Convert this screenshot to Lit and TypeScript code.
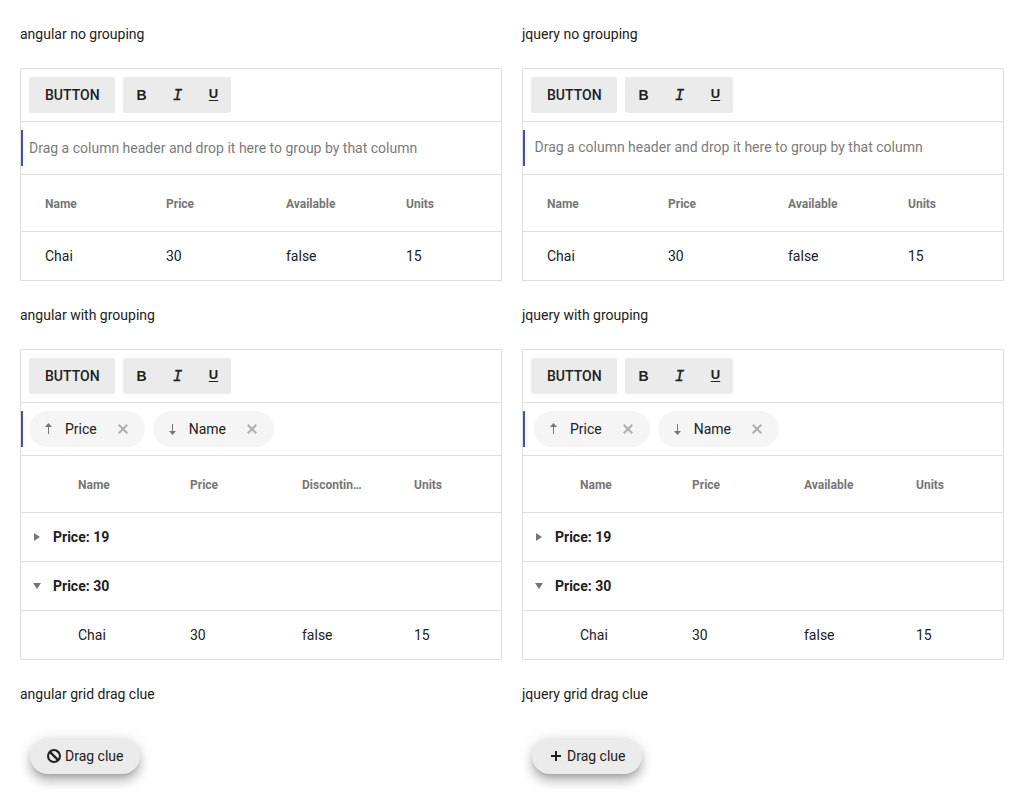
import { LitElement, html, css, svg, nothing } from "lit";
import { customElement, property } from "lit/decorators.js";

const icons = {
  up: svg`<path d="M7 13V6H4l3.500-4L11 6H8v7z"/>`,
  down: svg`<path d="M7 3v7H4l3.500 4L11 10H8V3z"/>`,
  close: svg`<path d="M13 11.500 9.500 8 13 4.500 11.500 3 8 6.500 4.500 3 3 4.500 6.500 8 3 11.500 4.500 13 8 9.500 11.500 13z"/>`,
  right: svg`<path d="M5 4v8l6-4z"/>`,
  expanded: svg`<path d="M4 5h8l-4 6z"/>`,
  denied: svg`<path fill-rule="evenodd" d="M8 1a7 7 0 1 0 0 14A7 7 0 0 0 8 1zM3 8a5 5 0 0 1 .8-2.600l6.800 6.800A5 5 0 0 1 3 8zm9.200 2.600-6.800-6.800a5 5 0 0 1 6.800 6.800z"/>`,
  plus: svg`<path d="M13 7H9V3H7v4H3v2h4v4h2V9h4z"/>`,
};

@customElement("ui-icon")
class UiIcon extends LitElement {
  static styles = css`
    :host { display: block; width: 16px; height: 16px; flex: none; }
    svg { display: block; width: 100%; height: 100%; fill: currentColor; }
  `;
  @property() name: keyof typeof icons = "plus";
  render() {
    return html`<svg viewBox="0 0 16 16">${icons[this.name]}</svg>`;
  }
}

@customElement("data-grid")
class DataGrid extends LitElement {
  static styles = css`
    :host { display: block; border: 1px solid #dedede; }
    .toolbar, .groupbar { display: flex; gap: 8px; height: 36px; padding: 8px; border-bottom: 1px solid #dedede; }
    .button, .formats { display: flex; align-items: center; box-sizing: border-box; height: 36px; border-radius: 2px; background: #ebebeb; }
    .button { width: 86px; padding-left: 16px; font-weight: 500; }
    .format { width: 36px; text-align: center; line-height: 16px; font-weight: 700; }
    .bold { font-family: "Liberation Sans", sans-serif; text-indent: 1px; }
    .italic { padding-top: 2px; font-family: "Liberation Mono", monospace; font-size: 16px; font-style: italic; font-weight: 400; -webkit-text-stroke: .3px currentColor; text-indent: 1px; }
    .underline { padding-bottom: 2px; font-family: "Liberation Sans", sans-serif; font-size: 13px; line-height: 14px; text-indent: 1px; text-decoration: underline; text-decoration-thickness: 1px; text-underline-offset: 2px; }
    .groupbar { padding-left: 0; }
    .indicator { width: 2px; height: 36px; background: #3f51b5; margin-right: -2px; }
    .hint { height: 36px; line-height: 34px; color: #7b7b7b; }
    .angular { line-height: 36px; }
    .hintoffset { padding-left: 3.500px; }
    .chips { display: flex; gap: 8px; }
    .chipoffset { padding-left: 3px; }
    .chip { display: flex; align-items: center; box-sizing: border-box; height: 36px; padding: 0 14px 0 12px; border-radius: 18px; background: #f5f5f5; }
    .label { margin: 0 18px 0 8px; }
    .sort { color: #767676; }
    .remove { color: #b0b0b0; }
    .row { display: grid; grid-template-columns: repeat(4, 1fr); align-items: center; height: 48px; border-top: 1px solid #dedede; }
    .header { height: 55px; padding-top: 1px; border-top: 0; font-size: 12px; font-weight: 700; color: #767676; }
    .indent { padding-left: 32px; }
    .cell { box-sizing: border-box; padding: 0 23px 0 25px; overflow: hidden; text-overflow: ellipsis; white-space: nowrap; }
    .plain .cell:first-child { padding-left: 24px; }
    .group { display: flex; align-items: center; gap: 8px; height: 48px; padding-left: 8px; border-top: 1px solid #dedede; font-weight: 700; }
    .toggle { color: #767676; }
  `;
  @property({ type: Boolean }) grouped = false;
  @property({ type: Boolean }) jquery = false;
  @property({ attribute: false }) columns: string[] = [];

  chip(icon: string, label: string) {
    return html`<div class="chip">
      <ui-icon class="sort" name=${icon}></ui-icon><span class="label">${label}</span><ui-icon class="remove" name="close"></ui-icon>
    </div>`;
  }
  group(icon: string, label: string) {
    return html`<div class="group"><ui-icon class="toggle" name=${icon}></ui-icon>${label}</div>`;
  }
  cells(values: string[]) {
    return values.map((v) => html`<div class="cell">${v}</div>`);
  }
  render() {
    const indent = this.grouped ? "indent" : "plain";
    return html`
      <div class="toolbar">
        <div class="button">BUTTON</div>
        <div class="formats">
          <span class="format bold">B</span><span class="format italic">I</span><span class="format underline">U</span>
        </div>
      </div>
      <div class="groupbar">
        <div class="indicator"></div>
        ${this.grouped
          ? html`<div class="chips ${this.jquery ? "chipoffset" : ""}">${this.chip("up", "Price")}${this.chip("down", "Name")}</div>`
          : html`<div class="hint ${this.jquery ? "hintoffset" : "angular"}">Drag a column header and drop it here to group by that column</div>`}
      </div>
      <div class="row header ${indent}">${this.cells(this.columns)}</div>
      ${this.grouped ? html`${this.group("right", "Price: 19")}${this.group("expanded", "Price: 30")}` : nothing}
      <div class="row ${indent}">${this.cells(["Chai", "30", "false", "15"])}</div>
    `;
  }
}

@customElement("drag-clue")
class DragClue extends LitElement {
  static styles = css`
    :host { display: flex; align-items: center; gap: 3px; box-sizing: border-box; width: 110.500px; height: 36px; margin: 10px 0 0 9.500px; padding-left: 16.500px; border-radius: 18px; background: #ebebeb; box-shadow: 0 5px 5px -3px rgba(0,0,0,.2), 0 8px 10px 1px rgba(0,0,0,.14), 0 3px 14px 2px rgba(0,0,0,.12); }
  `;
  @property() icon = "plus";
  render() {
    return html`<ui-icon name=${this.icon}></ui-icon><span>Drag clue</span>`;
  }
}

@customElement("app-root")
class AppRoot extends LitElement {
  static styles = css`
    :host { display: grid; grid-template-columns: 482px 482px; column-gap: 20px; box-sizing: border-box; height: 804px; padding: 0 20px; background: #fff; color: #212121; font: 14px/20px Roboto, sans-serif; overflow: hidden; }
    .title { height: 68px; line-height: 68px; }
  `;
  render() {
    const base = ["Name", "Price", "Available", "Units"];
    return ["angular", "jquery"].map((kind) => {
      const jq = kind === "jquery";
      const groupedColumns = jq ? base : ["Name", "Price", "Discontinued", "Units"];
      return html`<div>
        <div class="title">${kind} no grouping</div>
        <data-grid ?jquery=${jq} .columns=${base}></data-grid>
        <div class="title">${kind} with grouping</div>
        <data-grid grouped ?jquery=${jq} .columns=${groupedColumns}></data-grid>
        <div class="title">${kind} grid drag clue</div>
        <drag-clue icon=${jq ? "plus" : "denied"}></drag-clue>
      </div>`;
    });
  }
}
